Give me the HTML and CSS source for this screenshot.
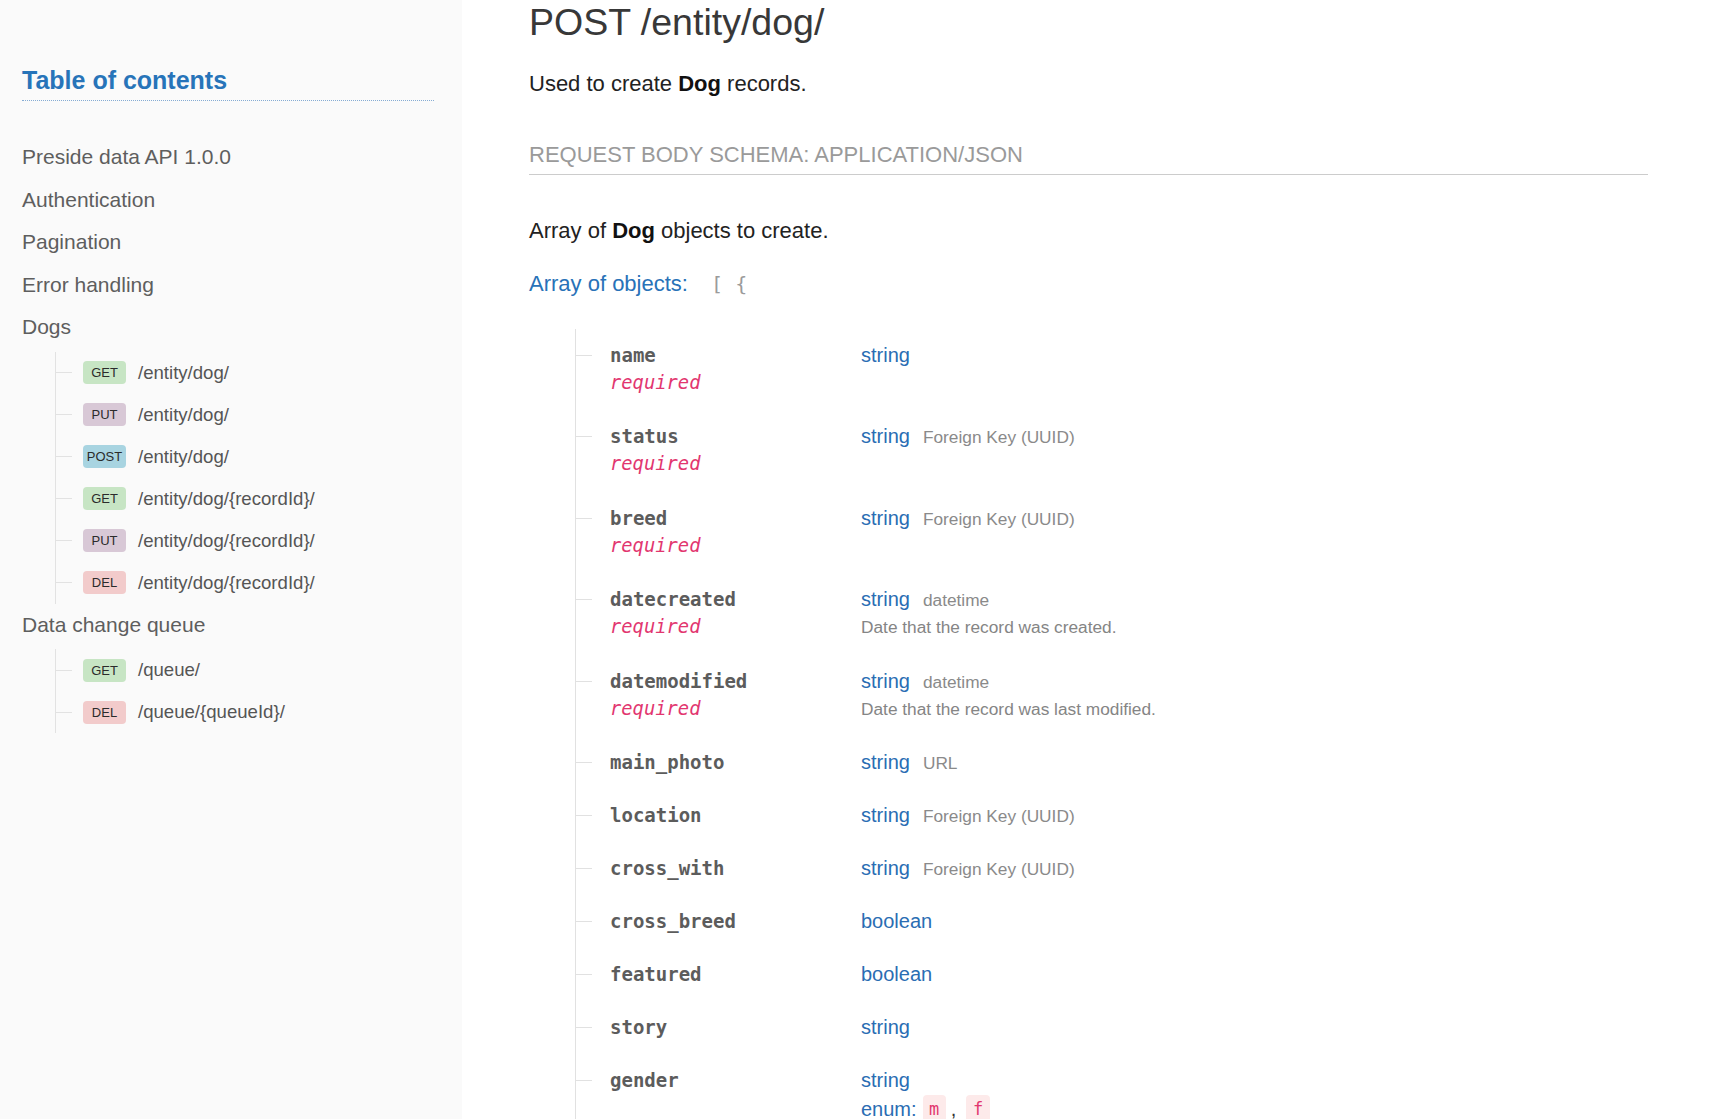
FILE: index.html
```html
<!DOCTYPE html>
<html lang="en">
<head>
<meta charset="utf-8">
<title>POST /entity/dog/</title>
<link rel="stylesheet" href="styles.css">
</head>
<body>
<div class="layout">
  <aside class="sidebar">
    <h2 class="toc-title">Table of contents</h2>
    <ul class="toc">
      <li class="toc-item">Preside data API 1.0.0</li>
      <li class="toc-item">Authentication</li>
      <li class="toc-item">Pagination</li>
      <li class="toc-item">Error handling</li>
      <li class="toc-item">Dogs</li>
      <li class="toc-group">
        <ul class="toc-sub">
          <li class="toc-op"><span class="badge get">GET</span><span class="op-path">/entity/dog/</span></li>
          <li class="toc-op"><span class="badge put">PUT</span><span class="op-path">/entity/dog/</span></li>
          <li class="toc-op"><span class="badge post">POST</span><span class="op-path">/entity/dog/</span></li>
          <li class="toc-op"><span class="badge get">GET</span><span class="op-path">/entity/dog/{recordId}/</span></li>
          <li class="toc-op"><span class="badge put">PUT</span><span class="op-path">/entity/dog/{recordId}/</span></li>
          <li class="toc-op"><span class="badge del">DEL</span><span class="op-path">/entity/dog/{recordId}/</span></li>
        </ul>
      </li>
      <li class="toc-item">Data change queue</li>
      <li class="toc-group">
        <ul class="toc-sub">
          <li class="toc-op"><span class="badge get">GET</span><span class="op-path">/queue/</span></li>
          <li class="toc-op"><span class="badge del">DEL</span><span class="op-path">/queue/{queueId}/</span></li>
        </ul>
      </li>
    </ul>
  </aside>

  <main class="content">
    <h1 class="op-title">POST /entity/dog/</h1>
    <p class="lead">Used to create <strong>Dog</strong> records.</p>

    <h3 class="schema-title">Request Body schema: application/json</h3>

    <p class="body-desc">Array of <strong>Dog</strong> objects to create.</p>

    <div class="array-label">Array of objects: <span class="bracket">[ {</span></div>

    <div class="fields">
      <div class="field">
        <div class="fcol"><div class="fname">name</div><div class="req">required</div></div>
        <div class="tcol"><div><span class="type">string</span></div></div>
      </div>
      <div class="field">
        <div class="fcol"><div class="fname">status</div><div class="req">required</div></div>
        <div class="tcol"><div><span class="type">string</span><span class="fmt">Foreign Key (UUID)</span></div></div>
      </div>
      <div class="field">
        <div class="fcol"><div class="fname">breed</div><div class="req">required</div></div>
        <div class="tcol"><div><span class="type">string</span><span class="fmt">Foreign Key (UUID)</span></div></div>
      </div>
      <div class="field">
        <div class="fcol"><div class="fname">datecreated</div><div class="req">required</div></div>
        <div class="tcol"><div><span class="type">string</span><span class="fmt">datetime</span></div><div class="fdesc">Date that the record was created.</div></div>
      </div>
      <div class="field">
        <div class="fcol"><div class="fname">datemodified</div><div class="req">required</div></div>
        <div class="tcol"><div><span class="type">string</span><span class="fmt">datetime</span></div><div class="fdesc">Date that the record was last modified.</div></div>
      </div>
      <div class="field">
        <div class="fcol"><div class="fname">main_photo</div></div>
        <div class="tcol"><div><span class="type">string</span><span class="fmt">URL</span></div></div>
      </div>
      <div class="field">
        <div class="fcol"><div class="fname">location</div></div>
        <div class="tcol"><div><span class="type">string</span><span class="fmt">Foreign Key (UUID)</span></div></div>
      </div>
      <div class="field">
        <div class="fcol"><div class="fname">cross_with</div></div>
        <div class="tcol"><div><span class="type">string</span><span class="fmt">Foreign Key (UUID)</span></div></div>
      </div>
      <div class="field">
        <div class="fcol"><div class="fname">cross_breed</div></div>
        <div class="tcol"><div><span class="type">boolean</span></div></div>
      </div>
      <div class="field">
        <div class="fcol"><div class="fname">featured</div></div>
        <div class="tcol"><div><span class="type">boolean</span></div></div>
      </div>
      <div class="field">
        <div class="fcol"><div class="fname">story</div></div>
        <div class="tcol"><div><span class="type">string</span></div></div>
      </div>
      <div class="field">
        <div class="fcol"><div class="fname">gender</div></div>
        <div class="tcol"><div><span class="type">string</span></div><div class="enum"><span class="type">enum:</span><span class="chip">m</span><span class="comma">,</span><span class="chip">f</span></div></div>
      </div>
    </div>
  </main>
</div>
</body>
</html>
```

FILE: styles.css
```css
html, body {
  margin: 0;
  padding: 0;
  background: #ffffff;
}

body {
  font-family: "Liberation Sans", Arial, sans-serif;
  color: #222222;
  overflow: hidden;
}

.layout {
  display: flex;
  align-items: stretch;
  min-height: 100vh;
}

/* ---------- sidebar ---------- */
.sidebar {
  flex: 0 0 462px;
  box-sizing: border-box;
  min-height: 100vh;
  background: #fafafa;
  padding: 65px 28px 0 22px;
}

.toc-title {
  margin: 0;
  font-size: 25px;
  line-height: 30px;
  font-weight: 600;
  color: #2774b9;
  padding-bottom: 5px;
  border-bottom: 1px dotted #86acd3;
}

.toc {
  list-style: none;
  margin: 35px 0 0;
  padding: 0;
}

.toc-item {
  font-size: 21px;
  line-height: 42.5px;
  color: #5e5e5e;
}

.toc-group {
  padding: 0;
}

.toc-sub {
  list-style: none;
  margin: 3px 0 0 33px;
  padding: 0;
  border-left: 1px solid #e2e2e2;
}

.toc-op {
  display: flex;
  align-items: center;
  height: 42px;
  padding-left: 27px;
  background: linear-gradient(#e2e2e2, #e2e2e2) no-repeat 0 50% / 16px 1px;
}

.badge {
  flex: 0 0 43px;
  height: 23px;
  line-height: 24px;
  border-radius: 4px;
  text-align: center;
  font-size: 13px;
  color: #2b2b2b;
}

.badge.get { background: #c7e5c4; }
.badge.put { background: #d8c8d6; }
.badge.post { background: #a8d4e1; }
.badge.del { background: #f2cbcb; }

.op-path {
  margin-left: 12px;
  font-size: 18.6px;
  color: #555555;
}

/* ---------- content ---------- */
.content {
  flex: 1 1 auto;
  min-width: 0;
  padding: 0 63px 0 67px;
}

.op-title {
  margin: 0;
  font-size: 37.5px;
  line-height: 44px;
  font-weight: normal;
  color: #383838;
}

.lead {
  margin: 25px 0 0;
  font-size: 22px;
  line-height: 30px;
  color: #222222;
}

.lead strong,
.body-desc strong {
  color: #111111;
}

.schema-title {
  margin: 41px 0 0;
  font-size: 22px;
  line-height: 30px;
  font-weight: normal;
  text-transform: uppercase;
  color: #9a9a9a;
  padding-bottom: 4px;
  border-bottom: 1px solid #cccccc;
}

.body-desc {
  margin: 41px 0 0;
  font-size: 22px;
  line-height: 30px;
  color: #222222;
}

.array-label {
  margin-top: 23px;
  font-size: 22px;
  line-height: 30px;
  color: #2872b8;
}

.bracket {
  margin-left: 17px;
  font-family: "DejaVu Sans Mono", monospace;
  font-size: 20px;
  color: #9b9b9b;
}

.fields {
  margin: 29.5px 0 0 46px;
  border-left: 1px solid #e1e1e1;
}

.field {
  display: grid;
  grid-template-columns: 251px 1fr;
  padding: 12px 0 13px 34px;
  line-height: 28px;
  background: linear-gradient(#e1e1e1, #e1e1e1) no-repeat 0 26px / 16px 1px;
}

.fname {
  font-family: "DejaVu Sans Mono", monospace;
  font-weight: bold;
  font-size: 19px;
  color: #5c5c5c;
}

.req {
  font-family: "DejaVu Sans Mono", monospace;
  font-style: italic;
  font-size: 18.8px;
  line-height: 28.6px;
  color: #e2366f;
}

.tcol {
  font-size: 20px;
}

.tcol > div {
  height: 28px;
}

.type {
  font-size: 20px;
  line-height: 1;
  color: #2a6db3;
}

.fmt {
  margin-left: 13px;
  font-size: 17.3px;
  line-height: 1;
  color: #8a8a8a;
}

.tcol > .fdesc {
  height: 28.6px;
  line-height: 28.6px;
  font-size: 17.3px;
  color: #858585;
}

.tcol > .enum {
  display: flex;
  align-items: center;
  height: 28.6px;
}

.chip {
  display: inline-block;
  margin-left: 6px;
  padding: 0 6.5px;
  line-height: 28px;
  font-family: "DejaVu Sans Mono", monospace;
  font-size: 17px;
  color: #e2366f;
  background: #fdeaea;
  border-radius: 4px;
}

.comma {
  margin-left: 5px;
  margin-right: 4px;
  font-size: 20px;
  line-height: 1;
  color: #333333;
}
```
